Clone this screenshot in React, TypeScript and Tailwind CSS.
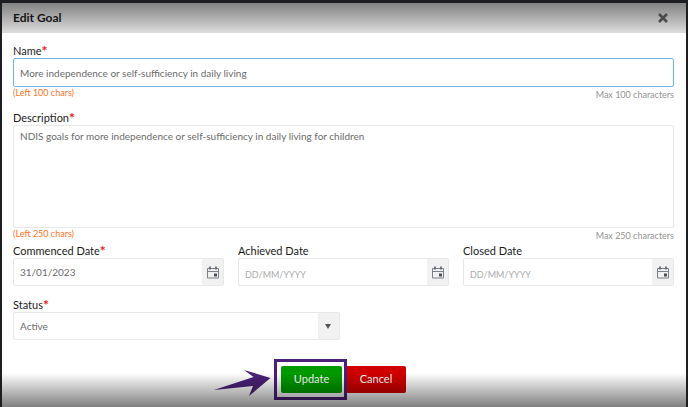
import { useState } from 'react';
import type { ReactNode } from 'react';

const fieldBorder = 'border border-[#e8e8e8] rounded-[2px]';

const Label = ({ htmlFor, required, children }: { htmlFor: string; required?: boolean; children: ReactNode }) => (
  <label htmlFor={htmlFor} className="flex h-3.5 items-center text-[11px] leading-[14px] text-[#1c1c1c]">
    {children}
    {required && <span className="text-[14px] leading-[14px] font-bold text-[#f01818]">*</span>}
  </label>
);

const Hint = ({ left, max }: { left: number; max: number }) => (
  <div className="flex h-4 items-start justify-between text-[9px]">
    <span className="leading-3 text-[#ff7424]">(Left {left} chars)</span>
    <span className="leading-4 text-[#949494]">Max {max} characters</span>
  </div>
);

const CalendarIcon = () => (
  <svg width="12" height="13" viewBox="0 0 12 13" fill="none" aria-hidden="true">
    <path d="M.5 2.5h11v9.5H.5zM.5 5.5h11" stroke="#7b7f88" />
    <path d="M3 .5v3M9 .5v3" stroke="#5c6069" strokeWidth="1.6" />
    <path d="M7 7.5h3v3H7z" fill="#4c5058" />
  </svg>
);

const DateField = ({ id, label, required, initial = '' }: { id: string; label: string; required?: boolean; initial?: string }) => {
  const [value, setValue] = useState(initial);

  return (
    <div>
      <Label htmlFor={id} required={required}>{label}</Label>
      <div className={`flex h-7 overflow-hidden bg-white ${fieldBorder}`}>
        <input
          id={id}
          value={value}
          onChange={(e) => setValue(e.target.value)}
          placeholder="DD/MM/YYYY"
          className="min-w-0 flex-1 px-1.5 text-[10px] text-[#6b6b6b] outline-none placeholder:text-[9px] placeholder:text-[#aaa] placeholder-shown:pt-1"
        />
        <button type="button" aria-label={`Choose ${label}`} className="flex w-[21px] items-center justify-center bg-[#f1f1f1]">
          <CalendarIcon />
        </button>
      </div>
    </div>
  );
};

const App = () => {
  const [name, setName] = useState('More independence or self-sufficiency in daily living');
  const [description, setDescription] = useState(
    'NDIS goals for more independence or self-sufficiency in daily living for children'
  );

  return (
    <div className="flex min-h-screen flex-col border-x-2 border-t-[3px] border-[#1c1e22] bg-white font-['Lato',sans-serif]">
      <div className="relative flex flex-1 flex-col">
        <header className="flex h-[30px] items-center justify-between bg-linear-to-b from-[#828282] to-[#dedede] pr-[18px] pl-[11px]">
          <h1 className="text-[12px] font-bold text-[#141414]">Edit Goal</h1>
          <button type="button" aria-label="Close">
            <svg width="10" height="10" viewBox="0 0 10 10" aria-hidden="true">
              <path d="M1 1l8 8M9 1l-8 8" stroke="#4b4b4b" strokeWidth="2.6" />
            </svg>
          </button>
        </header>

        <form className="pt-[11px] pr-3 pl-[11px]" onSubmit={(e) => e.preventDefault()}>
          <Label htmlFor="name" required>Name</Label>
          <input
            id="name"
            value={name}
            onChange={(e) => setName(e.target.value)}
            className="block h-[29px] w-full rounded-[2px] border border-[#6dbbe3] px-1.5 text-[10px] text-[#6b6b6b] outline-none"
          />
          <Hint left={100} max={100} />

          <div className="mt-2">
            <Label htmlFor="description" required>Description</Label>
            <textarea
              id="description"
              value={description}
              onChange={(e) => setDescription(e.target.value)}
              className={`block h-[103px] w-full resize-none px-1.5 py-[3px] text-[10px] leading-[14px] text-[#6b6b6b] outline-none ${fieldBorder}`}
            />
            <Hint left={250} max={250} />
          </div>

          <div className="grid grid-cols-3 gap-3.5">
            <DateField id="commenced" label="Commenced Date" required initial="31/01/2023" />
            <DateField id="achieved" label="Achieved Date" />
            <DateField id="closed" label="Closed Date" />
          </div>

          <div className="mt-3 grid grid-cols-2 gap-2">
            <div>
              <Label htmlFor="status" required>Status</Label>
              <div className={`relative h-7 overflow-hidden ${fieldBorder}`}>
                <select id="status" className="block h-full w-full appearance-none px-1.5 text-[10px] text-[#6b6b6b] outline-none">
                  <option>Active</option>
                  <option>Closed</option>
                </select>
                <span className="pointer-events-none absolute inset-y-0 right-0 flex w-[21px] items-center justify-center bg-[#f1f1f1]">
                  <svg width="6" height="5" viewBox="0 0 6 5" aria-hidden="true">
                    <path d="M0 0h6L3 5z" fill="#555" />
                  </svg>
                </span>
              </div>
            </div>
          </div>

          <div className="mt-[26px] flex justify-center gap-1 pb-3.5 text-[11px] text-white">
            <div className="relative">
              <button type="submit" className="block h-[27px] w-[61px] rounded-[2px] bg-[#009a00]">Update</button>
              <span className="pointer-events-none absolute -inset-y-[7px] -right-[5px] -left-[7px] border-3 border-[#4b2177]" />
              <svg className="absolute top-1 right-full mr-2.5" width="58" height="26" viewBox="0 0 58 26" aria-hidden="true">
                <path d="M1 20L40.5 7L31 0L57.5 8L36 26L40 16z" fill="#4b2177" />
              </svg>
            </div>
            <button type="button" className="h-[27px] w-[60px] rounded-[2px] bg-[#d00000]">Cancel</button>
          </div>
        </form>

        <div className="pointer-events-none absolute inset-x-0 bottom-0 h-[34px] bg-linear-to-b from-black/0 to-black/50" />
      </div>
    </div>
  );
};

export default App;
